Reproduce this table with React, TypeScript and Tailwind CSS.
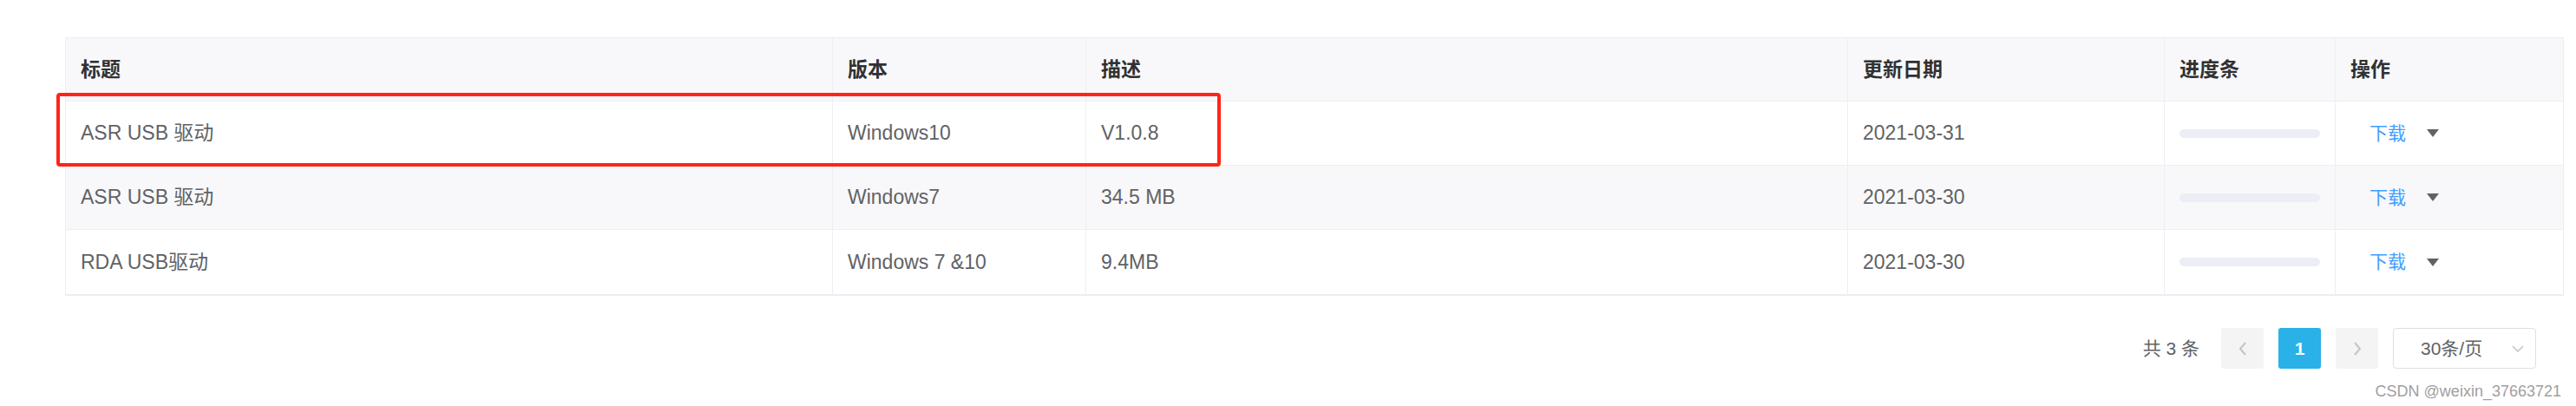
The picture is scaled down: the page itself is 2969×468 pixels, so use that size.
import { ReactNode } from 'react';

const font = { fontFamily: '"Liberation Sans", Arial, "Noto Sans CJK SC", sans-serif' };

type Row = { title: string; version: string; desc: string; date: string };

const rows: Row[] = [
  { title: 'ASR USB 驱动', version: 'Windows10', desc: 'V1.0.8', date: '2021-03-31' },
  { title: 'ASR USB 驱动', version: 'Windows7', desc: '34.5 MB', date: '2021-03-30' },
  { title: 'RDA USB驱动', version: 'Windows 7 &10', desc: '9.4MB', date: '2021-03-30' },
];

const cols = 'grid grid-cols-[884px_292px_878px_365px_197px_1fr]';

const Cell = ({ children, last = false, className = '' }: { children?: ReactNode; last?: boolean; className?: string }) => (
  <div className={`flex items-center pl-[17px] ${last ? '' : 'border-r border-[#ebeef5]'} ${className}`}>
    {children}
  </div>
);

const Caret = () => (
  <svg width="14" height="9" viewBox="0 0 14 9">
    <polygon points="0,0 14,0 7,9" fill="#606266" />
  </svg>
);

export default function App() {
  return (
    <div className="relative w-[2969px] h-[468px] bg-white" style={font}>
      <div className="pl-[75px] pr-[14px] pt-[43px]">
        {/* table */}
        <div className="border-t border-l border-r border-[#ebeef5] border-b-2">
          <div className={`${cols} h-[73px] bg-[#f8f8fa] border-b border-[#ebeef5] text-[23px] font-bold text-[#303133]`}>
            <Cell>标题</Cell>
            <Cell>版本</Cell>
            <Cell>描述</Cell>
            <Cell>更新日期</Cell>
            <Cell>进度条</Cell>
            <Cell last>操作</Cell>
          </div>
          {rows.map((r, i) => (
            <div
              key={i}
              className={`${cols} h-[74px] text-[23px] text-[#606266] ${i % 2 === 1 ? 'bg-[#f8f8fa]' : 'bg-white'} ${i < rows.length - 1 ? 'border-b border-[#ebeef5]' : ''}`}
            >
              <Cell>{r.title}</Cell>
              <Cell>{r.version}</Cell>
              <Cell>{r.desc}</Cell>
              <Cell>{r.date}</Cell>
              <Cell>
                <div className="h-[10px] w-[162px] rounded-full bg-[#ebeef5]" />
              </Cell>
              <Cell last className="pl-[39px] gap-[24px]">
                <span className="text-[21px] text-[#409eff]">下载</span>
                <Caret />
              </Cell>
            </div>
          ))}
        </div>

        {/* pagination */}
        <div className="flex items-center justify-end pr-[32px] mt-[37px] h-[47px] text-[21px] text-[#606266]">
          <span className="mr-[25px]">共 3 条</span>
          <button className="w-[49px] h-[47px] rounded-[3px] bg-[#f4f4f5] flex items-center justify-center">
            <svg width="10" height="16" viewBox="0 0 10 16">
              <polyline points="8,1 2,8 8,15" fill="none" stroke="#c0c4cc" strokeWidth="2" />
            </svg>
          </button>
          <button className="ml-[17px] w-[49px] h-[47px] rounded-[3px] bg-[#29b1e8] text-white font-bold text-[21px] flex items-center justify-center">
            1
          </button>
          <button className="ml-[17px] w-[49px] h-[47px] rounded-[3px] bg-[#f4f4f5] flex items-center justify-center">
            <svg width="10" height="16" viewBox="0 0 10 16">
              <polyline points="2,1 8,8 2,15" fill="none" stroke="#c0c4cc" strokeWidth="2" />
            </svg>
          </button>
          <div className="ml-[17px] w-[165px] h-[47px] rounded-[4px] border border-[#dcdfe6] flex items-center pl-[31px] pr-[13px]">
            <span className="flex-1">30条/页</span>
            <svg width="14" height="8" viewBox="0 0 14 8">
              <polyline points="1,1 7,7 13,1" fill="none" stroke="#c0c4cc" strokeWidth="1.5" />
            </svg>
          </div>
        </div>
      </div>

      {/* annotation box */}
      <div className="absolute left-[65px] top-[107px] w-[1342px] h-[85px] border-4 border-[#ff2419] rounded-[4px]" />

      {/* watermark */}
      <div className="absolute right-[17px] top-[438px] text-[18px] text-[#a0a0a0] [text-shadow:1px_1px_0_#fff]">
        CSDN @weixin_37663721
      </div>
    </div>
  );
}
